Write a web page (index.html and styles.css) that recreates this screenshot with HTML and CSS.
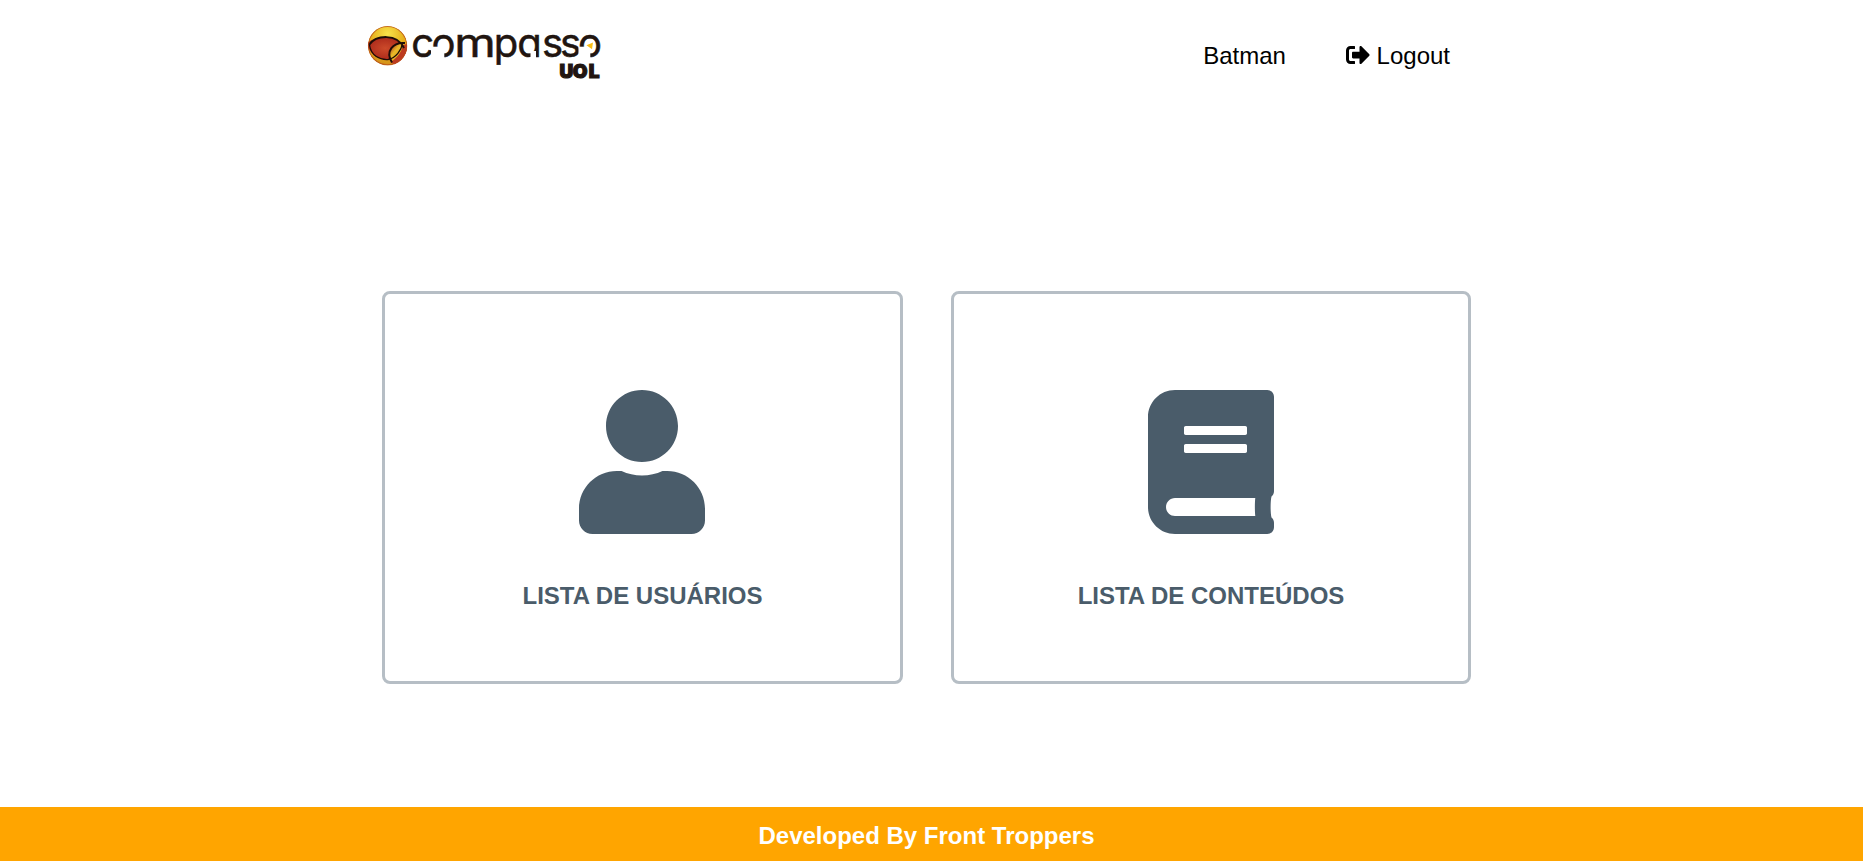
FILE: index.html
```html
<!DOCTYPE html>
<html lang="pt-BR">
<head>
<meta charset="utf-8">
<title>Compasso UOL</title>
<link rel="stylesheet" href="styles.css">
</head>
<body>
<header class="header">
  <a class="brand" aria-label="Compasso UOL">
    <svg class="logo" viewBox="366 20 240 62" width="240" height="62">
      <defs>
        <radialGradient id="gold" cx=".5" cy=".2" r=".85">
          <stop offset="0" stop-color="#f9e34a"/><stop offset=".5" stop-color="#e6b01c"/><stop offset="1" stop-color="#d08a18"/>
        </radialGradient>
        <radialGradient id="red" cx=".5" cy=".5" r=".6">
          <stop offset="0" stop-color="#cc4a2a"/><stop offset="1" stop-color="#a62418"/>
        </radialGradient>
        <linearGradient id="lens" x1="0" y1="0" x2="1" y2="1">
          <stop offset=".1" stop-color="#a8321a"/><stop offset=".4" stop-color="#e9b928"/><stop offset="1" stop-color="#d99a1c"/>
        </linearGradient>
        <clipPath id="ball"><circle cx="387.6" cy="45.7" r="19.7"/></clipPath>
      </defs>
      <g clip-path="url(#ball)">
        <circle cx="387.6" cy="45.7" r="19.7" fill="url(#gold)"/>
        <path d="M367 44C373 35.500 396 33 403.500 47C400 56 394 59.500 388 59.500C379 60 370 55 367 44Z" fill="url(#red)"/>
        <path d="M391 62C385.500 51 393 42 405 43C404 52 399 57 391 62Z" fill="url(#lens)"/>
        <path d="M391 62C398 57 402 51 403 45L407 44L408 56L396 66Z" fill="#bd3a20"/>
        <path d="M369.500 45C371 56 380 60 388 59.500C396 58 401.500 50 402.500 43.500" fill="none" stroke="#1d0d08" stroke-width="1.300"/>
        <path d="M369 45C376 35 397 33 404 48M392 62.500C385 51 393 42 405 43" fill="none" stroke="#1d0d08" stroke-width="2"/>
        <circle cx="387.6" cy="45.7" r="19.2" fill="none" stroke="#b5481c" stroke-width="1.200" opacity=".7"/>
      </g>
      <text class="wordmark" y="56.500" x="411.300 431.500">co<tspan x="454.300" textLength="41.500" lengthAdjust="spacingAndGlyphs">m</tspan><tspan x="493.800 517.300 541.900 560 578">passo</tspan></text>
      <g fill="#fff">
        <path d="M444.300 46.700H431V58H444.300Z"/>
        <path d="M590.300 46.700H578.500V58H590.300Z"/>
        <path d="M530.500 51H536V58H530.500Z"/>
      </g>
      <path d="M586.500 45.200L593 42.500L592 49.200Z" fill="#f9bd13"/>
      <text class="submark" x="559.600 572.800 588.800" y="77.700">UOL</text>
    </svg>
  </a>
  <nav class="nav">
    <span>Batman</span>
    <a class="logout"><svg width="24" height="24" viewBox="0 0 512 512"><path d="M497 273L329 441c-15 15-41 4.500-41-17v-96H152c-13.300 0-24-10.700-24-24v-96c0-13.300 10.700-24 24-24h136V88c0-21.400 25.900-32 41-17l168 168c9.300 9.400 9.300 24.600 0 34zM192 436v-40c0-6.600-5.400-12-12-12H96c-17.700 0-32-14.300-32-32V160c0-17.700 14.300-32 32-32h84c6.600 0 12-5.400 12-12V76c0-6.600-5.400-12-12-12H96c-53 0-96 43-96 96v192c0 53 43 96 96 96h84c6.600 0 12-5.400 12-12z"/></svg>Logout</a>
  </nav>
</header>
<main class="cards">
  <a class="card">
    <svg class="user" width="126" height="144" viewBox="0 0 448 512"><path d="M224 256c70.700 0 128-57.300 128-128S294.700 0 224 0 96 57.300 96 128s57.300 128 128 128zm89.600 32h-16.700c-22.200 10.200-46.900 16-72.900 16s-50.600-5.800-72.900-16h-16.700C60.200 288 0 348.200 0 422.400V464c0 26.500 21.500 48 48 48h352c26.500 0 48-21.500 48-48v-41.600c0-74.200-60.200-134.400-134.400-134.400z"/></svg>
    <span>LISTA DE USUÁRIOS</span>
  </a>
  <a class="card">
    <svg width="126" height="144" viewBox="0 0 448 512"><path d="M448 360V24c0-13.300-10.700-24-24-24H96C43 0 0 43 0 96v320c0 53 43 96 96 96h328c13.300 0 24-10.700 24-24v-16c0-7.500-3.500-14.300-8.900-18.700-4.200-15.400-4.200-59.300 0-74.700 5.400-4.300 8.900-11.100 8.900-18.600zM128 134c0-3.300 2.700-6 6-6h212c3.300 0 6 2.700 6 6v20c0 3.300-2.700 6-6 6H134c-3.300 0-6-2.700-6-6v-20zm0 64c0-3.300 2.700-6 6-6h212c3.300 0 6 2.700 6 6v20c0 3.300-2.700 6-6 6H134c-3.300 0-6-2.700-6-6v-20zm253.400 250H96c-17.700 0-32-14.300-32-32 0-17.600 14.400-32 32-32h285.400c-1.900 17.100-1.900 46.900 0 64z"/></svg>
    <span>LISTA DE CONTEÚDOS</span>
  </a>
</main>
<footer class="footer">Developed By Front Troppers</footer>
</body>
</html>
```
FILE: styles.css
```css
* { box-sizing: border-box; }
body {
  margin: 0;
  height: 861px;
  display: flex;
  flex-direction: column;
  overflow: hidden;
  background: #fff;
  font-family: "Liberation Sans", Arial, sans-serif;
  font-size: 24px;
  line-height: 28px;
}
.header {
  display: flex;
  justify-content: space-between;
  align-items: flex-start;
  height: 111px;
  padding: 20px 413px 0 366px;
}
.logo { display: block; overflow: visible; }
.wordmark {
  font-family: Inter, sans-serif;
  font-size: 40px;
  font-weight: 400;
  font-feature-settings: "cv11";
  fill: #211510;
  stroke: #211510;
  stroke-width: .5px;
}
.submark {
  font-family: Inter, sans-serif;
  font-size: 19px;
  font-weight: 900;
  fill: #211510;
  stroke: #211510;
  stroke-width: 1.2px;
}
.nav {
  display: flex;
  gap: 60px;
  padding-top: 22px;
  color: #000;
}
.logout { display: flex; gap: 6.67px; }
.logout svg { margin-top: 1px; }
.cards {
  flex: 1;
  display: grid;
  grid-template-columns: 521px 520px;
  gap: 48px;
  padding: 180px 0 0 382px;
  align-items: start;
}
.card {
  display: flex;
  flex-direction: column;
  align-items: center;
  height: 393px;
  padding-top: 96px;
  border: 3px solid #b6bec5;
  border-radius: 8px;
  color: #4a5c6a;
  font-weight: 700;
}
.card svg, .logout svg { fill: currentColor; }
.card .user { margin-right: 1px; }
.card span { margin-top: 48px; }
.footer {
  height: 54px;
  padding: 15px 10px 0 0;
  background: #ffa500;
  color: #fff;
  font-weight: 700;
  text-align: center;
}
```
